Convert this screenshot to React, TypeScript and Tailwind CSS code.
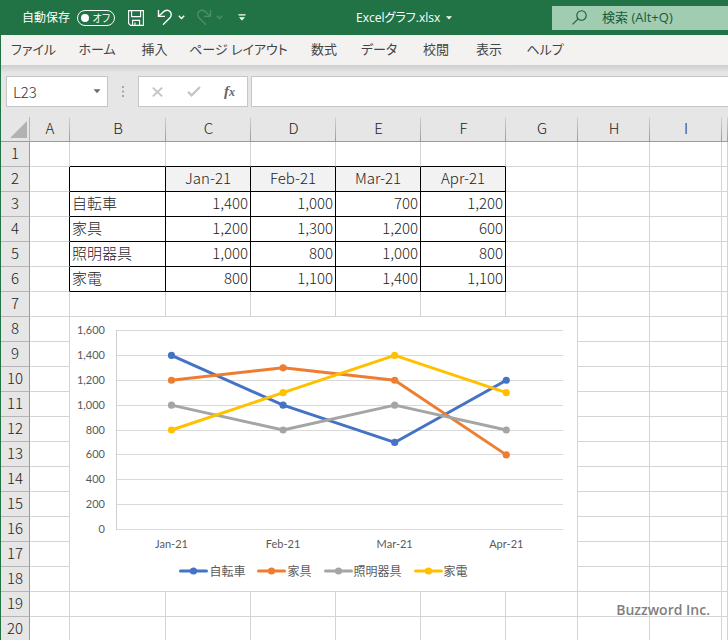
import { clsx } from "clsx";

const UI_FONT = "font-['Open_Sans','Noto_Sans_CJK_JP',sans-serif]";
const SHEET_FONT = "font-['Noto_Sans_CJK_JP',sans-serif]";

const tabs = ["ファイル", "ホーム", "挿入", "ページ レイアウト", "数式", "データ", "校閲", "表示", "ヘルプ"];

const columns = ["A", "B", "C", "D", "E", "F", "G", "H", "I", ""];
const columnWidths = [
  "w-[40px]",
  "w-[96px]",
  "w-[85px]",
  "w-[85px]",
  "w-[85px]",
  "w-[85px]",
  "w-[72px]",
  "w-[72px]",
  "w-[72px]",
  "",
];

const months = ["Jan-21", "Feb-21", "Mar-21", "Apr-21"];

const series = [
  { name: "自転車", color: "#4472c4", values: [1400, 1000, 700, 1200] },
  { name: "家具", color: "#ed7d31", values: [1200, 1300, 1200, 600] },
  { name: "照明器具", color: "#a5a5a5", values: [1000, 800, 1000, 800] },
  { name: "家電", color: "#ffc000", values: [800, 1100, 1400, 1100] },
];

// rows 2-6, columns B-F hold the data
const cellText = (row: number, col: number) => {
  if (row < 2 || row > 6 || col < 1 || col > 5) return "";
  if (row === 2) return col === 1 ? "" : months[col - 2];
  const item = series[row - 3];
  return col === 1 ? item.name : item.values[col - 2].toLocaleString("en-US");
};

const Chevron = ({ className }: { className?: string }) => (
  <svg viewBox="0 0 7 5" className={clsx("h-[5px] w-[7px]", className)} fill="none" stroke="currentColor" strokeWidth="1.4">
    <path d="M0.8 0.8 3.5 3.5 6.2 0.8" />
  </svg>
);

const TitleBar = () => (
  <header className="relative flex h-[35px] items-center bg-[#217346] pl-[22px] text-xs text-white">
    <label htmlFor="autosave">自動保存</label>
    <button
      id="autosave"
      role="switch"
      aria-checked="false"
      className="ml-[7px] flex h-4 w-[38px] items-center justify-between rounded-full border border-white pr-1 pl-[3px] text-[10px] leading-none [font-feature-settings:'palt']"
    >
      <span className="size-2 rounded-full bg-white" />
      オフ
    </button>
    <button aria-label="上書き保存" className="ml-[13px]">
      <svg viewBox="0 0 16 16" className="size-4" fill="none" stroke="currentColor" strokeWidth="1.1">
        <path d="M0.6 0.6H15.4V15.4H2.6L0.6 13.4Z" />
        <path d="M3.6 0.6V6.6H12.6V0.6" />
        <path d="M4.6 15.4V10.4H11.6V15.4M7 12.4V15.4" />
      </svg>
    </button>
    <button aria-label="元に戻す" className="ml-[13px]">
      <svg viewBox="0 0 16 17" className="h-[17px] w-4" fill="none" stroke="currentColor" strokeWidth="1.4">
        <path d="M1.5 1V7.4H8" />
        <path d="M1.8 7.2 6.2 2.9C8.6 0.6 11.4 0.8 13 2.5C14.8 4.4 14.6 7.3 12.8 9L6 15.8" />
      </svg>
    </button>
    <button aria-label="元に戻すの一覧" className="ml-[5px]">
      <Chevron />
    </button>
    <button aria-label="やり直し" className="ml-[11px] text-[#4c8f6a]">
      <svg viewBox="0 0 16 17" className="h-[17px] w-4" fill="none" stroke="currentColor" strokeWidth="1.4">
        <path d="M14.5 1V7.4H8" />
        <path d="M14.2 7.2 9.8 2.9C7.4 0.6 4.6 0.8 3 2.5C1.2 4.4 1.4 7.3 3.2 9L10 15.8" />
      </svg>
    </button>
    <button aria-label="やり直しの一覧" className="ml-[4px] text-[#4c8f6a]">
      <Chevron />
    </button>
    <button aria-label="ツールバーのユーザー設定" className="ml-[15px]">
      <svg viewBox="0 0 8 7" className="h-[7px] w-2">
        <path d="M0.5 0.2H7.5V1.5H0.5ZM1 3.2H7L4 6.4Z" fill="currentColor" />
      </svg>
    </button>
    <button className="absolute inset-y-0 left-[356px] flex items-center gap-[6px] [font-feature-settings:'palt']">
      Excelグラフ.xlsx
      <svg viewBox="0 0 6 4" className="h-1 w-[6px]">
        <path d="M0 0.3H6L3 3.5Z" fill="currentColor" />
      </svg>
    </button>
    <label className="ml-auto flex h-6 w-44 items-center bg-[#a0cdb2] pl-5 text-[#185c37]">
      <svg viewBox="0 0 15 15" className="size-[15px] shrink-0" fill="none" stroke="currentColor" strokeWidth="1.1">
        <circle cx="9.5" cy="5.5" r="4.7" />
        <path d="M6.1 8.9 0.6 14.4" />
      </svg>
      <input
        type="search"
        aria-label="検索"
        placeholder="検索 (Alt+Q)"
        className="ml-[15px] w-full min-w-0 bg-transparent text-[13px] placeholder:text-[#185c37] placeholder:opacity-100 outline-none"
      />
    </label>
  </header>
);

const RibbonTabs = () => (
  <nav className="grid h-[30px] grid-cols-[65px_62px_53px_115px_56px_54px_60px_46px_66px] items-center border-l border-[#217346] bg-[#f3f2f1] text-[13px] text-[#444] [font-feature-settings:'palt']">
    {tabs.map((tab) => (
      <button key={tab} className="text-center whitespace-nowrap">
        {tab}
      </button>
    ))}
  </nav>
);

const FormulaBar = () => (
  <div className="flex h-[52px] items-start border-l border-[#217346] bg-linear-to-b from-[#cfcfcf] to-[#e6e6e6] to-15% pt-[11px]">
    <div className={clsx("ml-[5px] flex h-[31px] w-[102px] items-center border border-[#c6c6c6] bg-white", SHEET_FONT)}>
      <input
        aria-label="名前ボックス"
        defaultValue="L23"
        className="ml-[6px] w-20 pt-[2px] text-[15px] font-light text-[#333] outline-none"
      />
      <button aria-label="名前の一覧">
        <svg viewBox="0 0 8 5" className="h-[5px] w-2">
          <path d="M0.5 0.3H7.5L4 4.2Z" fill="#6b6b6b" />
        </svg>
      </button>
    </div>
    <svg viewBox="0 0 2 11" className="mt-[10px] ml-[14px] h-[11px] w-[2px]" fill="#a6a6a6">
      <path d="M0 0H2V2H0ZM0 4.5H2V6.5H0ZM0 9H2V11H0Z" />
    </svg>
    <div className="ml-[14px] flex h-[31px] w-[110px] items-center justify-between border border-[#c6c6c6] bg-white pr-3 pl-[13px]">
      <button aria-label="キャンセル">
        <svg viewBox="0 0 11 10" className="h-[10px] w-[11px]" fill="none" stroke="#c4c4c4" strokeWidth="1.8">
          <path d="M0.8 0.6 10.2 9.4M10.2 0.6 0.8 9.4" />
        </svg>
      </button>
      <button aria-label="入力">
        <svg viewBox="0 0 14 11" className="h-[11px] w-[14px]" fill="none" stroke="#c4c4c4" strokeWidth="2.2">
          <path d="M1 5.8 4.6 9.4 13 1" />
        </svg>
      </button>
      <button aria-label="関数の挿入" className="font-['Liberation_Serif',serif] text-[15px] leading-none font-bold text-[#666] italic">
        f<span className="text-xs">x</span>
      </button>
    </div>
    <input aria-label="数式バー" className="ml-[3px] h-[31px] min-w-0 flex-1 border border-r-0 border-[#c6c6c6] bg-white px-1 text-[15px] outline-none" />
  </div>
);

const Chart = () => {
  const x = (i: number) => 171.5 + i * 111.6;
  const y = (v: number) => 529.5 - (v / 200) * 24.875;
  const ticks = [0, 200, 400, 600, 800, 1000, 1200, 1400, 1600];

  return (
    <figure className="absolute top-[199px] left-[69px] w-[509px] border border-[#d4d4d4] bg-white pb-[6px]">
      <svg viewBox="70 317 507 240" className="block w-full font-['Lato',sans-serif] text-[11px]" fill="#595959">
        {ticks.map((t) => (
          <g key={t}>
            <path d={`M116 ${Math.floor(y(t)) + 0.5}H563`} stroke="#d9d9d9" />
            <text x="105" y={Math.floor(y(t)) + 4} textAnchor="end">
              {t.toLocaleString("en-US")}
            </text>
          </g>
        ))}
        <path d="M116.5 330V530" stroke="#d0d0d0" />
        {months.map((m, i) => (
          <text key={m} x={x(i)} y="548" textAnchor="middle">
            {m}
          </text>
        ))}
        {series.map((s) => (
          <g key={s.name} fill={s.color}>
            <polyline
              points={s.values.map((v, i) => `${x(i)},${y(v)}`).join(" ")}
              fill="none"
              stroke={s.color}
              strokeWidth="3"
              strokeLinejoin="round"
            />
            {s.values.map((v, i) => (
              <circle key={i} cx={x(i)} cy={y(v)} r="3.6" />
            ))}
          </g>
        ))}
      </svg>
      <figcaption className="flex h-7 items-center justify-center gap-3 text-xs text-[#595959]">
        {series.map((s) => (
          <span key={s.name} className="flex items-center gap-px">
            <svg viewBox="0 0 29 8" className="h-2 w-[29px]" fill={s.color}>
              <path d="M1.5 4H27.5" stroke={s.color} strokeWidth="3" strokeLinecap="round" />
              <circle cx="14.5" cy="4" r="3.6" />
            </svg>
            {s.name}
          </span>
        ))}
      </figcaption>
    </figure>
  );
};

const Sheet = () => (
  <main className={clsx("relative border-l border-[#217346]", SHEET_FONT)}>
    <div className="relative -ml-px pl-px">
      <table className="w-full table-fixed border-separate border-spacing-0 text-[15px] leading-[22px] text-[#222]">
        <colgroup>
          <col className="w-[29px]" />
          {columnWidths.map((w, i) => (
            <col key={i} className={w} />
          ))}
        </colgroup>
        <thead>
          <tr className="h-[25px] bg-[#e6e6e6]">
            <th aria-label="すべて選択" className="border-r border-b border-[#9b9b9b] border-r-[#b5b5b5] p-0">
              <svg viewBox="0 0 17 17" className="mr-[2px] ml-auto size-[17px]">
                <path d="M17 0V17H0Z" fill="#b2b2b2" />
              </svg>
            </th>
            {columns.map((c, i) => (
              <th
                key={i}
                className="border-b border-[#9b9b9b] bg-linear-to-b from-[#d2d2d2] to-[#9b9b9b] bg-[length:1px_100%] bg-right bg-no-repeat p-0 align-top font-light"
              >
                {c}
              </th>
            ))}
          </tr>
        </thead>
        <tbody>
          {Array.from({ length: 20 }, (_, r) => r + 1).map((row) => (
            <tr key={row} className="h-[25px] align-top">
              <th className="border-r border-b border-[#b5b5b5] border-r-[#9b9b9b] bg-[#e6e6e6] p-0 font-light">{row}</th>
              {columns.map((_, col) => {
                const inTable = row >= 2 && row <= 6 && col >= 1 && col <= 5;
                const aboveTable = row === 1 && col >= 1 && col <= 5;
                const leftOfTable = col === 0 && row >= 2 && row <= 6;
                return (
                  <td
                    key={col}
                    className={clsx(
                      "border-r border-b p-0 px-[2px] font-light whitespace-nowrap",
                      inTable || leftOfTable ? "border-r-black" : "border-r-[#d4d4d4]",
                      inTable || aboveTable ? "border-b-black" : "border-b-[#d4d4d4]",
                      inTable && row === 2 && col > 1 && "bg-[#f2f2f2] text-center",
                      inTable && row > 2 && col > 1 && "text-right",
                    )}
                  >
                    {cellText(row, col)}
                  </td>
                );
              })}
            </tr>
          ))}
        </tbody>
      </table>
      <Chart />
    </div>
  </main>
);

export default function App() {
  return (
    <div className={clsx("relative h-screen overflow-hidden bg-white", UI_FONT)}>
      <TitleBar />
      <RibbonTabs />
      <FormulaBar />
      <Sheet />
      <p className="absolute right-[18px] bottom-5 text-sm font-semibold text-[#7f7f7f]">Buzzword Inc.</p>
    </div>
  );
}
